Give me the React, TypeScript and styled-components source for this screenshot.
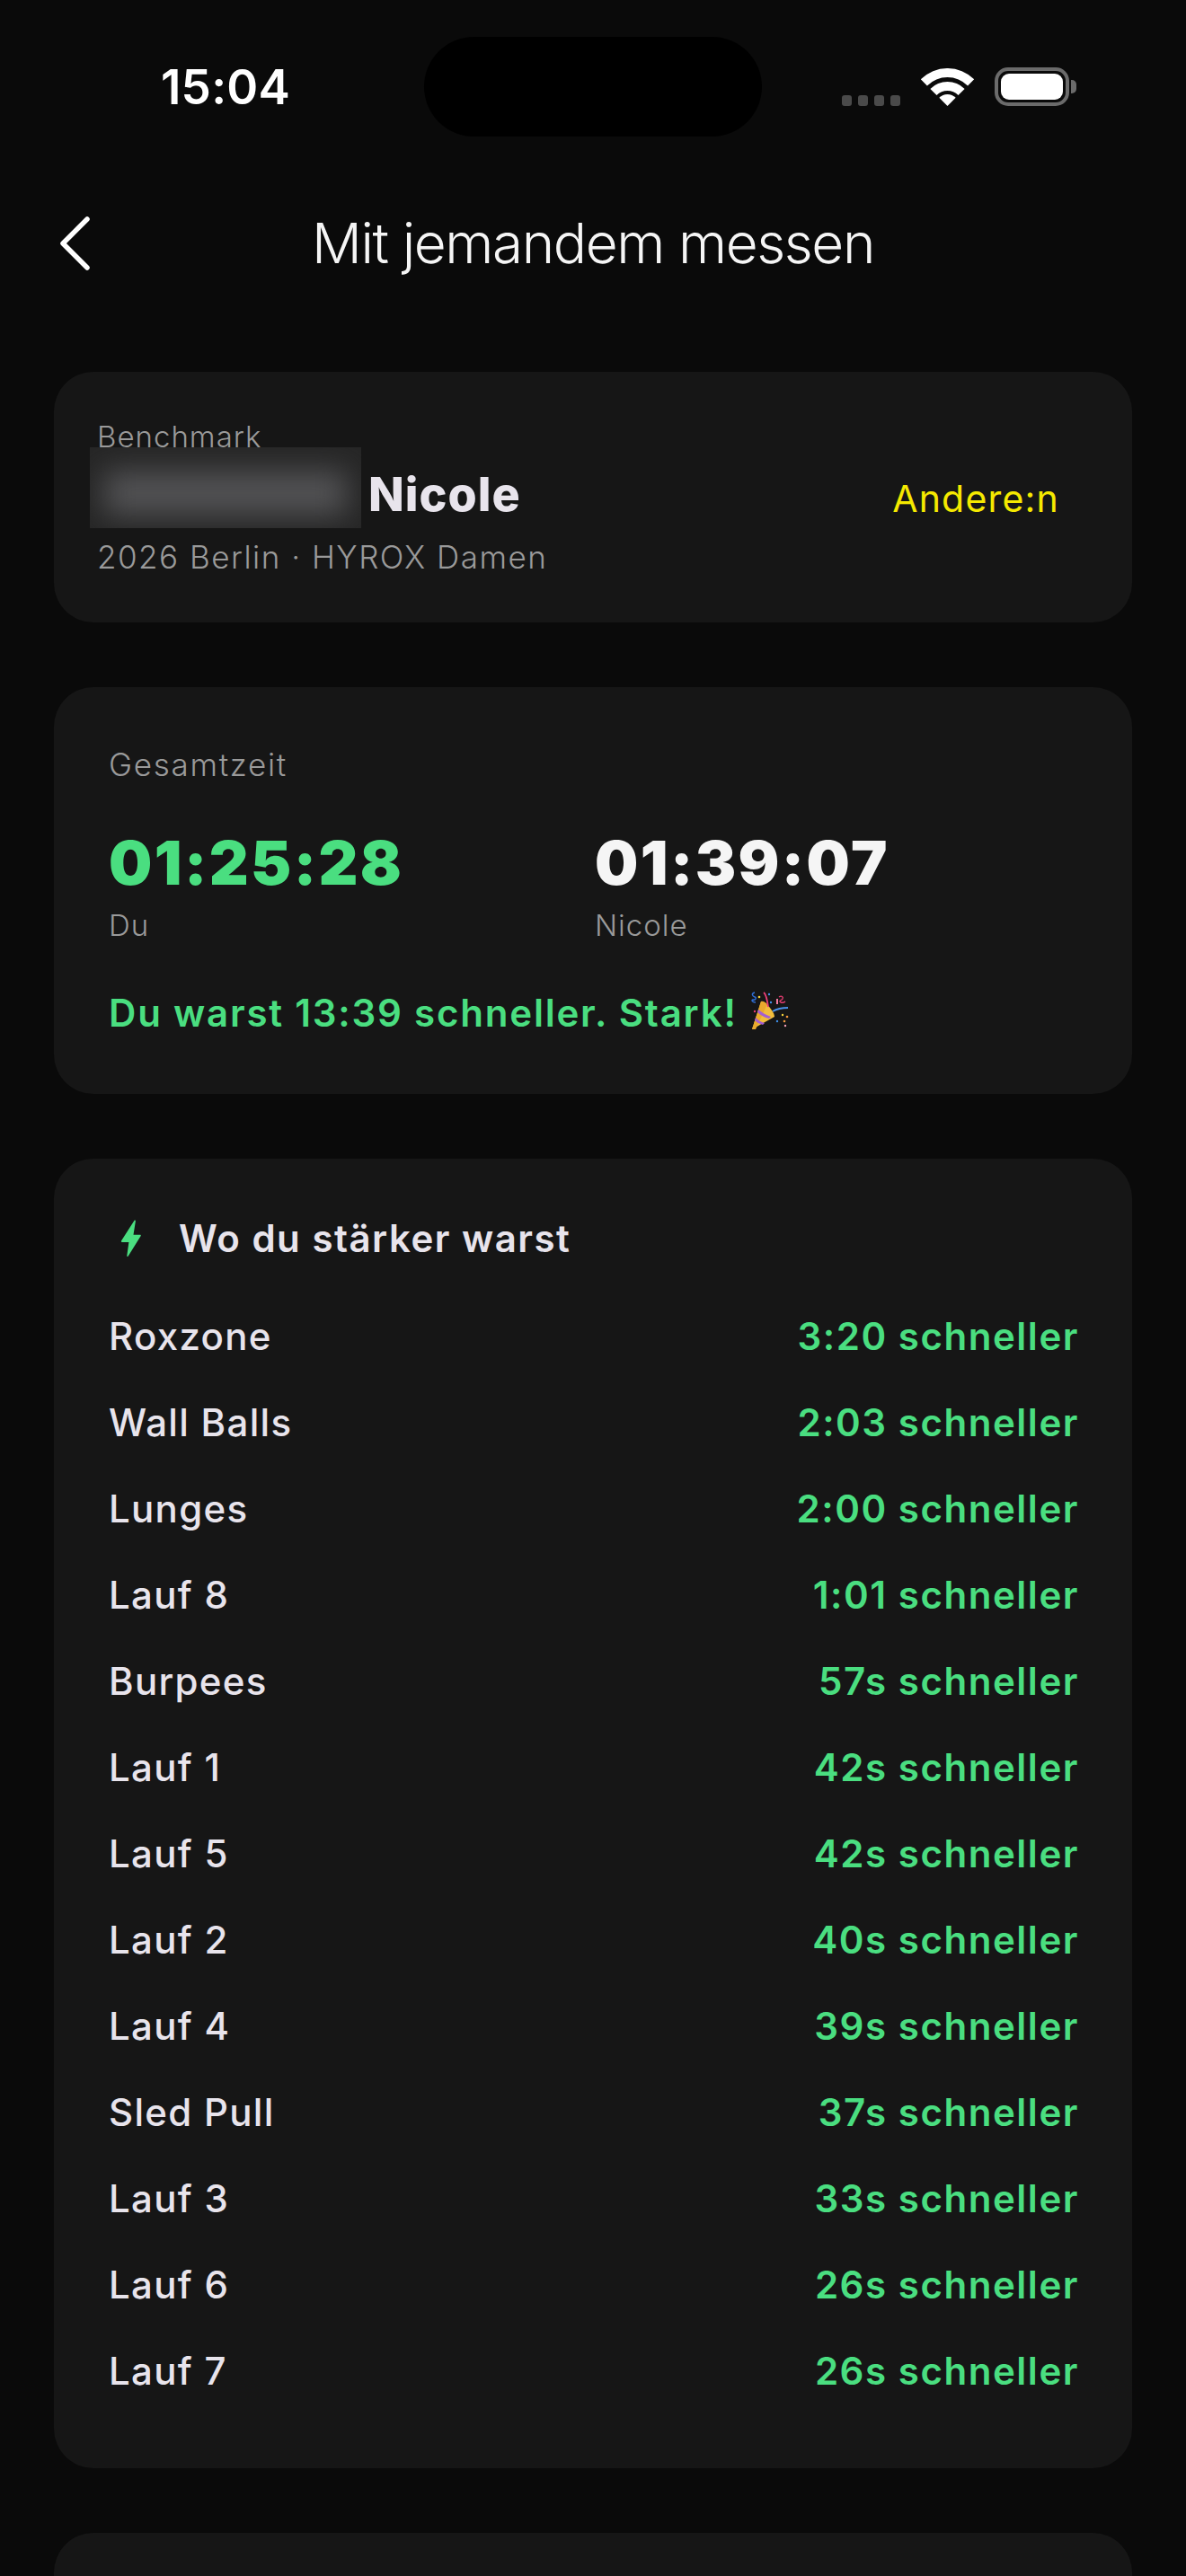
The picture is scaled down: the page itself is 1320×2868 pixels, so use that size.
import React from 'react'
import styled, { createGlobalStyle } from 'styled-components'

const GlobalStyle = createGlobalStyle`
    html, body {
        margin: 0;
        padding: 0;
        background: #0a0a0a;
    }
    * {
        box-sizing: border-box;
    }
`

const rows = [
    ['Roxzone', '3:20 schneller'],
    ['Wall Balls', '2:03 schneller'],
    ['Lunges', '2:00 schneller'],
    ['Lauf 8', '1:01 schneller'],
    ['Burpees', '57s schneller'],
    ['Lauf 1', '42s schneller'],
    ['Lauf 5', '42s schneller'],
    ['Lauf 2', '40s schneller'],
    ['Lauf 4', '39s schneller'],
    ['Sled Pull', '37s schneller'],
    ['Lauf 3', '33s schneller'],
    ['Lauf 6', '26s schneller'],
    ['Lauf 7', '26s schneller'],
]

const App = () => (
    <Page>
        <GlobalStyle />
        <StatusBar>
            <Clock>15:04</Clock>
            <Island />
            <StatusIcons>
                <SignalDots>
                    <i />
                    <i />
                    <i />
                    <i />
                </SignalDots>
                <svg width="61" height="42" viewBox="-2 0 61 42" fill="#fff">
                    <path d="M-1.2 12.3A42 42 0 0 1 58.2 12.3L51.1 19.4A32 32 0 0 0 5.9 19.4Z" />
                    <path d="M9.4 22.9A27 27 0 0 1 47.6 22.9L40.5 30A17 17 0 0 0 16.5 30Z" />
                    <path d="M19.3 32.8A13 13 0 0 1 37.7 32.8L28.5 42Z" />
                </svg>
                <Battery>
                    <BatteryFill />
                </Battery>
            </StatusIcons>
        </StatusBar>

        <NavBar>
            <BackButton>
                <svg width="36" height="60" viewBox="0 0 36 60" fill="none" stroke="#fff" strokeWidth="5.5" strokeLinecap="round" strokeLinejoin="round">
                    <path d="M32 3 5 30l27 27" />
                </svg>
            </BackButton>
            <NavTitle>Mit jemandem messen</NavTitle>
        </NavBar>

        <Cards>
            <BenchmarkCard>
                <div>
                    <Eyebrow>Benchmark</Eyebrow>
                    <NameRow>
                        <Redacted>
                            <RedactedInk />
                        </Redacted>
                        <Name>Nicole</Name>
                    </NameRow>
                    <EventLine>2026 Berlin · HYROX Damen</EventLine>
                </div>
                <ChangeLink>Andere:n</ChangeLink>
            </BenchmarkCard>

            <TotalCard>
                <TotalLabel>Gesamtzeit</TotalLabel>
                <TimesGrid>
                    <div>
                        <BigTime $accent>01:25:28</BigTime>
                        <TimeOwner>Du</TimeOwner>
                    </div>
                    <div>
                        <BigTime>01:39:07</BigTime>
                        <TimeOwner>Nicole</TimeOwner>
                    </div>
                </TimesGrid>
                <Verdict>
                    Du warst 13:39 schneller. Stark!
                    <PartyPopper width="46" height="45" viewBox="20 15 46 45">
                        <path d="M23 58 33 27c4-1 15 11 15 17Z" fill="#f2bd3c" />
                        <path d="M23 58 33 27c2-1 5 1 7 3L27 58Z" fill="#e9a92d" />
                        <path d="M30 36c4 3 8 6 14 8l-2 2c-5-1-10-4-13-7Z" fill="#a45fd0" />
                        <path d="M27 45c3 3 6 5 10 6l-2 2c-4-1-7-3-9-5Z" fill="#a45fd0" />
                        <path d="M46 38c5-3 11-4 17-4" fill="none" stroke="#4a90e8" strokeWidth="2" />
                        <path d="M36 17c3 2 4 9 5 16" fill="none" stroke="#ec3f78" strokeWidth="1.8" />
                        <path d="M51 24v6" fill="none" stroke="#f27aa0" strokeWidth="2" />
                        <path d="M53 22c3-2 5 0 4 2s-5 2-2 4c2 1 3 0 5-1" fill="none" stroke="#e23c70" strokeWidth="1.4" />
                        <path d="M26 17c-4 1-3 4 0 5s0 4-2 3c-2 0-1 3 3 3" fill="none" stroke="#2f6fd8" strokeWidth="1.4" />
                        <circle cx="31" cy="22" r="1.3" fill="#f5d33c" />
                        <circle cx="42" cy="19" r="1.2" fill="#3f8fe8" />
                        <circle cx="44" cy="28" r="1.2" fill="#3f8fe8" />
                        <circle cx="26" cy="38" r="1.2" fill="#e23c70" />
                        <circle cx="57" cy="42" r="1.2" fill="#f5d33c" />
                        <circle cx="62" cy="44" r="1.3" fill="#f0983c" />
                        <circle cx="51" cy="49" r="1.2" fill="#3f8fe8" />
                        <circle cx="59" cy="49" r="1.3" fill="#f0983c" />
                        <circle cx="60" cy="54" r="1.2" fill="#f4a0b8" />
                    </PartyPopper>
                </Verdict>
            </TotalCard>

            <StrengthCard>
                <CardHeading>
                    <svg width="24" height="42" viewBox="0 0 24 42" fill="#4ade80">
                        <path d="M15.4 1 1 23.6c-.4.7 0 1.4.8 1.4h7.6L7.3 40c-.1 1 .9 1.3 1.4.6l14-22.6c.4-.7 0-1.3-.8-1.3h-7.4l2.4-15.2c.1-1-.9-1.3-1.5-.5Z" />
                    </svg>
                    <HeadingText>Wo du stärker warst</HeadingText>
                </CardHeading>
                <SplitList>
                    {rows.map(([label, delta]) => (
                        <SplitRow key={label}>
                            <SplitLabel>{label}</SplitLabel>
                            <SplitDelta>{delta}</SplitDelta>
                        </SplitRow>
                    ))}
                </SplitList>
            </StrengthCard>

            <EmptyCard />
        </Cards>
    </Page>
)

export default App

const Page = styled.div`
    width: 1320px;
    height: 2868px;
    overflow: hidden;
    background: #0a0a0a;
    font-family: Inter, "Liberation Sans", sans-serif;
    color: #fff;
`

const StatusBar = styled.div`
    display: grid;
    grid-template-columns: 472px 376px 1fr;
    height: 152px;
    padding-top: 41px;
`

const Clock = styled.div`
    padding: 30px 0 0 179px;
    font-size: 53px;
    line-height: 52px;
    font-weight: 600;
    letter-spacing: 0.2px;
`

const Island = styled.div`
    height: 111px;
    border-radius: 56px;
    background: #000;
`

const StatusIcons = styled.div`
    display: flex;
    align-items: flex-end;
    height: 77px;
    padding-left: 89px;
`

const SignalDots = styled.div`
    display: flex;
    gap: 7px;
    margin: 0 22px 0 0;
    i {
        display: block;
        width: 11px;
        height: 12px;
        border-radius: 3px;
        background: #4a4a4a;
    }
`

const Battery = styled.div`
    position: relative;
    width: 83px;
    height: 43px;
    margin-left: 22px;
    padding: 3px;
    border: 4px solid #6b6b6b;
    border-radius: 15px;
    &::after {
        content: '';
        position: absolute;
        top: 10px;
        right: -12px;
        width: 6px;
        height: 15px;
        border-radius: 0 5px 5px 0;
        background: #6b6b6b;
    }
`

const BatteryFill = styled.div`
    height: 100%;
    border-radius: 9px;
    background: #fff;
`

const NavBar = styled.div`
    position: relative;
    display: flex;
    align-items: center;
    justify-content: center;
    height: 118px;
    margin-top: 60px;
    margin-bottom: 84px;
`

const BackButton = styled.div`
    position: absolute;
    left: 65px;
    top: 29px;
    line-height: 0;
`

const NavTitle = styled.div`
    font-size: 62px;
    line-height: 76px;
    font-weight: 300;
    letter-spacing: -1.4px;
    color: #f5f5f5;
`

const Cards = styled.div`
    display: flex;
    flex-direction: column;
    gap: 72px;
    padding: 0 60px;
`

const Card = styled.div`
    border-radius: 44px;
    background: #161616;
`

const BenchmarkCard = styled(Card)`
    display: flex;
    align-items: flex-start;
    justify-content: space-between;
    height: 279px;
    padding: 52px 81px 0 48px;
`

const Eyebrow = styled.div`
    height: 32px;
    font-size: 33px;
    line-height: 40px;
    font-weight: 300;
    letter-spacing: 1px;
    color: #9a9a9a;
`

const NameRow = styled.div`
    display: flex;
    align-items: flex-end;
    height: 90px;
    margin-left: -8px;
`

const Redacted = styled.div`
    width: 302px;
    height: 90px;
    overflow: hidden;
    background: #262626;
`

const RedactedInk = styled.div`
    width: 270px;
    height: 50px;
    margin: 26px 0 0 16px;
    background: #525254;
    filter: blur(16px);
`

const Name = styled.div`
    margin: 0 0 6px 8px;
    font-size: 52px;
    line-height: 62px;
    font-weight: 800;
    letter-spacing: 1px;
    color: #e8e4ec;
`

const EventLine = styled.div`
    margin-top: 12px;
    font-size: 35px;
    line-height: 40px;
    font-weight: 300;
    letter-spacing: 1.5px;
    color: #9a9a9a;
`

const ChangeLink = styled.div`
    margin-top: 65px;
    font-size: 41px;
    line-height: 48px;
    font-weight: 400;
    letter-spacing: 1.2px;
    color: #f5e900;
`

const TotalCard = styled(Card)`
    height: 453px;
    padding: 64px 60px 0 61px;
`

const TotalLabel = styled.div`
    font-size: 35px;
    line-height: 44px;
    font-weight: 300;
    letter-spacing: 1.7px;
    color: #9a9a9a;
`

const TimesGrid = styled.div`
    display: grid;
    grid-template-columns: 541px 1fr;
    margin-top: 52px;
`

const BigTime = styled.div<{ $accent?: boolean }>`
    font-size: 68px;
    line-height: 70px;
    font-weight: 900;
    letter-spacing: 2.4px;
    color: ${p => (p.$accent ? '#4ade80' : '#f5f5f5')};
`

const TimeOwner = styled.div`
    margin-top: 15px;
    font-size: 33px;
    line-height: 40px;
    font-weight: 300;
    letter-spacing: 1px;
    color: #9a9a9a;
`

const Verdict = styled.div`
    display: flex;
    align-items: center;
    margin-top: 53px;
    font-size: 42px;
    line-height: 50px;
    font-weight: 600;
    letter-spacing: 1.8px;
    color: #4ade80;
`

const PartyPopper = styled.svg`
    margin: -6px 0 0 13px;
`

const StrengthCard = styled(Card)`
    height: 1458px;
    padding: 64px 59px 0 61px;
`

const CardHeading = styled.div`
    display: flex;
    align-items: center;
    height: 50px;
    padding-left: 13px;
`

const HeadingText = styled.div`
    margin-left: 41px;
    font-size: 42px;
    line-height: 52px;
    font-weight: 600;
    letter-spacing: 1.5px;
    color: #e8e4ec;
`

const SplitList = styled.div`
    display: flex;
    flex-direction: column;
    margin-top: 35px;
`

const SplitRow = styled.div`
    display: flex;
    align-items: center;
    justify-content: space-between;
    height: 96px;
    font-size: 42px;
`

const SplitLabel = styled.div`
    font-weight: 500;
    letter-spacing: 1.3px;
    color: #e8e4ec;
`

const SplitDelta = styled.div`
    font-weight: 600;
    letter-spacing: 1.55px;
    color: #4ade80;
`

const EmptyCard = styled(Card)`
    height: 200px;
`
